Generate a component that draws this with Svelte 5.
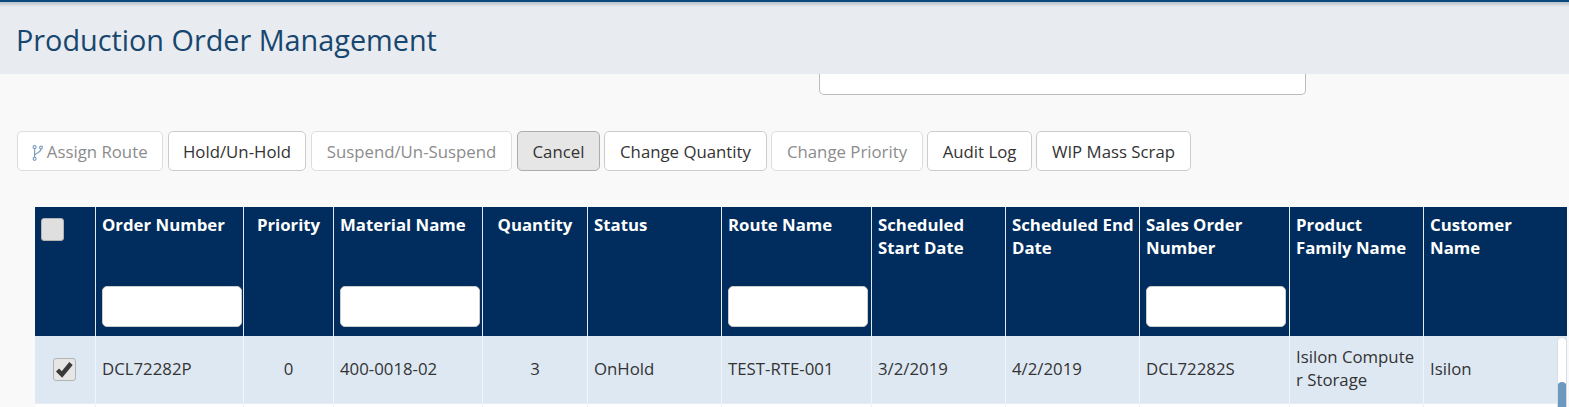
<script>
   const buttons = [
      { label: 'Assign Route', state: 'disabled', icon: true, width: 146 },
      { label: 'Hold/Un-Hold', state: '', width: 138 },
      { label: 'Suspend/Un-Suspend', state: 'disabled', width: 201 },
      { label: 'Cancel', state: 'active', width: 83 },
      { label: 'Change Quantity', state: '', width: 163 },
      { label: 'Change Priority', state: 'disabled', width: 152 },
      { label: 'Audit Log', state: '', width: 105 },
      { label: 'WIP Mass Scrap', state: '', width: 155 }
   ];

   // width includes the 1px right border of each cell
   const columns = [
      { key: 'check', label: '', width: 61, center: true },
      { key: 'order', label: 'Order Number', width: 148, filter: true },
      { key: 'priority', label: 'Priority', width: 90, center: true },
      { key: 'material', label: 'Material Name', width: 149, filter: true },
      { key: 'quantity', label: 'Quantity', width: 105, center: true },
      { key: 'status', label: 'Status', width: 134 },
      { key: 'route', label: 'Route Name', width: 150, filter: true },
      { key: 'start', label: 'Scheduled Start Date', width: 134 },
      { key: 'end', label: 'Scheduled End Date', width: 134, tight: true },
      { key: 'sales', label: 'Sales Order Number', width: 150, filter: true },
      { key: 'family', label: 'Product Family Name', width: 134 },
      { key: 'customer', label: 'Customer Name', width: 143 }
   ];

   const row = {
      order: 'DCL72282P',
      priority: '0',
      material: '400-0018-02',
      quantity: '3',
      status: 'OnHold',
      route: 'TEST-RTE-001',
      start: '3/2/2019',
      end: '4/2/2019',
      sales: 'DCL72282S',
      family: 'Isilon Computer Storage',
      customer: 'Isilon'
   };
</script>

<div class="page">
   <header class="title-bar">
      <h1>Production Order Management</h1>
   </header>

   <div class="panel-row">
      <div class="panel"></div>
   </div>

   <div class="toolbar">
      {#each buttons as b}
         <button class="btn {b.state}" style="width:{b.width}px">
            {#if b.icon}
               <svg class="route-icon" width="11" height="16" viewBox="0 0 11 16" fill="none" stroke="#7f9fc0" stroke-width="1.2">
                  <circle cx="2.6" cy="2.2" r="1.5" />
                  <circle cx="9" cy="2.6" r="1.4" />
                  <circle cx="2.6" cy="13.8" r="1.5" />
                  <path d="M2.6 3.8v8.4M9 4c0 3.6-5.2 3.4-6.4 6.4" />
               </svg>
            {/if}
            {b.label}
         </button>
      {/each}
   </div>

   <div class="table-wrap">
      <table>
         <colgroup>
            {#each columns as c}
               <col style="width:{c.width}px" />
            {/each}
         </colgroup>
         <thead>
            <tr>
               {#each columns as c}
                  <th class:center={c.center} class:tight={c.tight}>
                     {#if c.key === 'check'}
                        <span class="check head-check"></span>
                     {:else}
                        <div class="th-label">{c.label}</div>
                        {#if c.filter}
                           <input class="filter" type="text" aria-label={c.label} />
                        {/if}
                     {/if}
                  </th>
               {/each}
            </tr>
         </thead>
         <tbody>
            <tr class="selected">
               {#each columns as c}
                  <td class:center={c.center} class:check-cell={c.key === 'check'}>
                     {#if c.key === 'check'}
                        <span class="check">
                           <svg width="19" height="17" viewBox="0 0 19 17">
                              <path d="M2.5 9 7 13.5 16 2.5" fill="none" stroke="#3a3a3a" stroke-width="4.4" />
                           </svg>
                        </span>
                     {:else}
                        {row[c.key]}
                     {/if}
                  </td>
               {/each}
            </tr>
            <tr class="empty">
               {#each columns as c}
                  <td></td>
               {/each}
            </tr>
         </tbody>
      </table>
      <div class="scrollbar"><div class="thumb"></div></div>
   </div>
</div>

<style>
   :global(body) {
      margin: 0;
      background: #f9f9f9;
      overflow: hidden;
   }

   .page {
      width: 1569px;
      height: 407px;
      overflow: hidden;
      font-family: "Open Sans", sans-serif;
      font-size: 16.8px;
      color: #333;
   }

   .title-bar {
      box-sizing: border-box;
      height: 74px;
      padding: 21px 0 0 16px;
      background: linear-gradient(#b9c0ca, #e8ebf0 5px);
      border-top: 2px solid #0b4a7c;
   }

   h1 {
      margin: 0;
      font-size: 28.8px;
      font-weight: 400;
      line-height: 34px;
      color: #17466f;
   }

   .panel-row {
      padding-left: 819px;
   }

   .panel {
      box-sizing: border-box;
      width: 487px;
      height: 21px;
      background: #fff;
      border: 1px solid #bbb;
      border-top: none;
      border-radius: 0 0 5px 5px;
   }

   .toolbar {
      display: flex;
      gap: 4px;
      margin: 36px 0 0 17px;
   }

   .btn {
      box-sizing: border-box;
      height: 40px;
      padding: 0;
      background: #fff;
      border: 1px solid #ccc;
      border-radius: 5px;
      font: inherit;
      color: #333;
      white-space: nowrap;
   }

   .btn:nth-child(-n+3) {
      margin-right: 1px;
   }

   .btn.disabled {
      color: #8c8c8c;
      border-color: #ddd;
   }

   .btn.active {
      background: #e6e6e6;
      border-color: #adadad;
   }

   .route-icon {
      vertical-align: -3px;
      margin-right: -1px;
   }

   .table-wrap {
      position: relative;
      margin: 36px 0 0 35px;
      width: 1534px;
   }

   table {
      width: 1532px;
      table-layout: fixed;
      border-collapse: separate;
      border-spacing: 0;
   }

   th {
      box-sizing: border-box;
      height: 129px;
      padding: 6px 6px 8px 6px;
      background: #002d5d;
      color: #fff;
      font-weight: 700;
      line-height: 23px;
      text-align: left;
      vertical-align: top;
      border-right: 1px solid #e4e8ee;
      position: relative;
   }

   th.tight {
      padding-right: 0;
   }

   th:last-child, td:last-child {
      border-right: none;
   }

   th.center {
      text-align: center;
   }

   .filter {
      position: absolute;
      left: 6px;
      bottom: 9px;
      box-sizing: border-box;
      width: 140px;
      height: 41px;
      background: #fff;
      border: 1px solid #ccc;
      border-radius: 5px;
      padding: 0;
   }

   td {
      box-sizing: border-box;
      padding: 0 6px;
      line-height: 23px;
      text-align: left;
      vertical-align: middle;
      border-right: 1px solid #eef0f3;
      word-break: break-all;
   }

   td.center {
      text-align: center;
   }

   td.check-cell {
      padding: 0 8px 0 6px;
   }

   .selected td {
      height: 68px;
      padding-bottom: 3px;
      background: #dee8f2;
      border-right-color: #f1f4f8;
      border-bottom: 1px solid #e8edf3;
   }

   .empty td {
      height: 4px;
      background: #fff;
      padding: 0;
   }

   .check {
      box-sizing: border-box;
      display: inline-flex;
      align-items: center;
      justify-content: center;
      width: 23px;
      height: 23px;
      vertical-align: middle;
      background: #e6e6e6;
      border: 1px solid #b3b3b3;
      border-radius: 3px;
   }

   .head-check {
      margin-top: 5px;
      float: left;
      background: #dfdfdf;
   }

   .scrollbar {
      position: absolute;
      right: 2px;
      top: 130px;
      box-sizing: border-box;
      width: 10px;
      height: 70px;
      background: #fff;
      border: 1px solid #d8dde3;
      border-bottom: none;
      border-radius: 5px 5px 0 0;
      overflow: hidden;
   }

   .thumb {
      margin: 44px -1px 0;
      height: 30px;
      background: #6d98bf;
      border-radius: 5px 5px 0 0;
   }
</style>
